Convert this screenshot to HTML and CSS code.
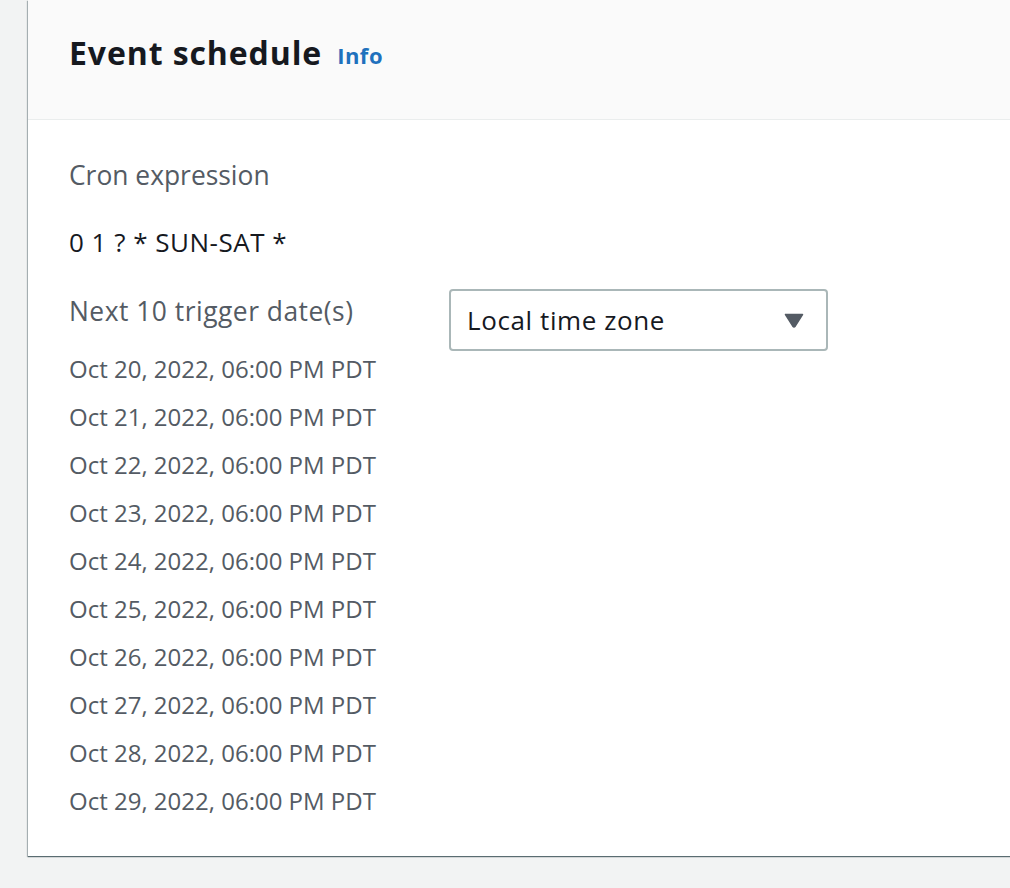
FILE: index.html
```html
<!DOCTYPE html>
<html>
<head>
<meta charset="utf-8">
<link rel="stylesheet" href="styles.css">
</head>
<body>
<div class="page">
  <section class="card">
    <header class="card-header">
      <h2 class="title">Event schedule</h2>
      <a class="info" href="#">Info</a>
    </header>
    <div class="card-body">
      <div class="label">Cron expression</div>
      <div class="value">0 1 ? * SUN-SAT *</div>
      <div class="trigger">
        <div class="dates">
          <div class="label label-wide">Next 10 trigger date(s)</div>
          <ul class="date-list">
            <li>Oct 20, 2022, 06:00 PM PDT</li>
            <li>Oct 21, 2022, 06:00 PM PDT</li>
            <li>Oct 22, 2022, 06:00 PM PDT</li>
            <li>Oct 23, 2022, 06:00 PM PDT</li>
            <li>Oct 24, 2022, 06:00 PM PDT</li>
            <li>Oct 25, 2022, 06:00 PM PDT</li>
            <li>Oct 26, 2022, 06:00 PM PDT</li>
            <li>Oct 27, 2022, 06:00 PM PDT</li>
            <li>Oct 28, 2022, 06:00 PM PDT</li>
            <li>Oct 29, 2022, 06:00 PM PDT</li>
          </ul>
        </div>
        <div class="select">
          <span class="select-text">Local time zone</span>
          <svg class="caret" width="20" height="15" viewBox="0 0 20 15"><path d="M1.5 1.5 H18.5 L11.2 13.2 Q10 14.6 8.8 13.2 Z" fill="#545b64" stroke="#545b64" stroke-width="1.5" stroke-linejoin="round"/></svg>
        </div>
      </div>
    </div>
  </section>
</div>
</body>
</html>
```
FILE: styles.css
```css
html, body {
  margin: 0;
  padding: 0;
  background: #f2f3f3;
  overflow: hidden;
  width: 1010px;
  height: 888px;
}
body {
  font-family: "Open Sans", "Noto Sans", sans-serif;
}
.page {
  padding-left: 28px;
  overflow: hidden;
  padding-bottom: 4px;
}
.card {
  margin-right: -60px;
  background: #fff;
  box-shadow: 0 1px 1px 0 rgba(0, 28, 36, 0.5), -1px 1px 1px 0 rgba(0, 28, 36, 0.25);
}
.card-header {
  background: #fafafa;
  border-bottom: 1px solid #eaeded;
  display: flex;
  align-items: center;
  padding-left: 41px;
  padding-bottom: 15px;
  height: 104px;
}
.title {
  margin: 0;
  font-size: 32px;
  font-weight: 700;
  color: #16191f;
  letter-spacing: 0.9px;
}
.info {
  margin-left: 15px;
  font-size: 22px;
  font-weight: 700;
  color: #1f71bd;
  text-decoration: none;
  letter-spacing: 0.5px;
  padding-top: 5px;
}
.card-body {
  padding: 37px 0 31px 41px;
}
.label {
  font-size: 26.4px;
  line-height: 36px;
  color: #545b64;
}
.label-wide {
  letter-spacing: 0.5px;
}
.value {
  margin-top: 31px;
  font-size: 26px;
  line-height: 36px;
  color: #16191f;
  letter-spacing: 0.5px;
}
.trigger {
  margin-top: 29px;
  display: flex;
  align-items: flex-start;
}
.dates {
  width: 380px;
  padding-top: 4px;
}
.date-list {
  list-style: none;
  margin: 16px 0 0;
  padding: 0;
}
.date-list li {
  font-size: 24px;
  line-height: 48px;
  color: #545b64;
}
.select {
  width: 379px;
  height: 62px;
  box-sizing: border-box;
  border: 2px solid #aab7b8;
  border-radius: 4px;
  display: flex;
  align-items: center;
  justify-content: space-between;
  padding: 0 22px 0 16px;
}
.select-text {
  font-size: 26px;
  letter-spacing: 0.6px;
  color: #16191f;
}
.caret {
  display: block;
}
```
